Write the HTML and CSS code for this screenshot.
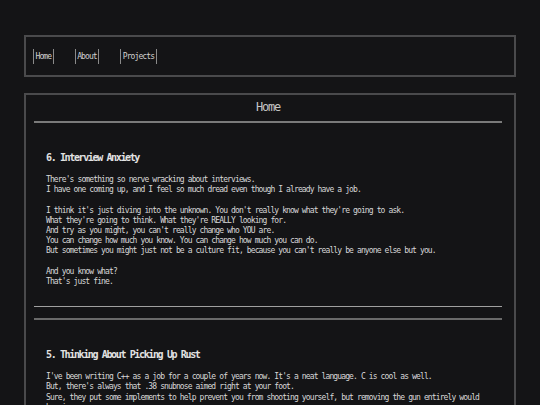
FILE: index.html
```html
<!DOCTYPE html>
<html lang="en">
<head>
<meta charset="utf-8">
<title>Home</title>
<link rel="stylesheet" href="styles.css">
</head>
<body>
<div class="wrap">
  <nav class="nav">
    <a class="nav-link" href="#">Home</a>
    <a class="nav-link" href="#">About</a>
    <a class="nav-link" href="#">Projects</a>
  </nav>
  <main class="main">
    <h1 class="title">Home</h1>
    <hr class="title-rule">
    <article class="post">
      <h2 class="post-title">6. Interview Anxiety</h2>
      <div class="post-body">There's something so nerve wracking about interviews.
I have one coming up, and I feel so much dread even though I already have a job.

I think it's just diving into the unknown. You don't really know what they're going to ask.
What they're going to think. What they're REALLY looking for.
And try as you might, you can't really change who YOU are.
You can change how much you know. You can change how much you can do.
But sometimes you might just not be a culture fit, because you can't really be anyone else but you.

And you know what?
That's just fine.</div>
    </article>
    <hr class="post-rule">
    <article class="post">
      <h2 class="post-title">5. Thinking About Picking Up Rust</h2>
      <div class="post-body">I've been writing C++ as a job for a couple of years now. It's a neat language. C is cool as well.
But, there's always that .38 snubnose aimed right at your foot.
Sure, they put some implements to help prevent you from shooting yourself, but removing the gun entirely would
be nice.</div>
    </article>
  </main>
</div>
</body>
</html>
```
FILE: styles.css
```css
html, body {
  margin: 0;
  padding: 0;
  background: #141416;
}

body {
  font-family: "DejaVu Sans Mono", "Liberation Mono", monospace;
  color: #d6d6d6;
}

.wrap {
  margin: 35px 24px 0;
}

.nav {
  box-sizing: border-box;
  height: 42px;
  border: 2px solid #4a4a4c;
  display: flex;
  align-items: center;
  gap: 21px;
  padding-left: 7px;
}

.nav-link {
  display: block;
  height: 15px;
  line-height: 15px;
  padding: 0 1.5px;
  border-left: 1px solid #8a8a8a;
  border-right: 1px solid #8a8a8a;
  color: #d0d0d0;
  text-decoration: none;
  font-size: 8px;
  letter-spacing: -0.9px;
}

.main {
  margin-top: 16px;
  border: 2px solid #4a4a4c;
  border-bottom: none;
  padding: 0 12px 40px 8px;
}

.title {
  margin: 0;
  height: 26px;
  line-height: 25px;
  text-align: center;
  font-size: 12px;
  font-weight: normal;
  letter-spacing: -1.2px;
  color: #c4c4c4;
}

.title-rule {
  margin: 0;
  border: none;
  height: 2px;
  background: #7a7a7a;
}

.post {
  padding: 28px 12px 19px;
  border-bottom: 1px solid #a0a0a0;
}

.post-title {
  margin: 0 0 10px;
  height: 14px;
  line-height: 14px;
  font-size: 10px;
  font-weight: bold;
  letter-spacing: -1.37px;
  color: #e2e2e2;
}

.post-body {
  white-space: pre-line;
  font-size: 8px;
  line-height: 10.2px;
  letter-spacing: -0.88px;
  color: #d8d8d8;
}

.post-rule {
  margin: 11px 0 0;
  border: none;
  height: 2px;
  background: #6a6a6a;
}
```
